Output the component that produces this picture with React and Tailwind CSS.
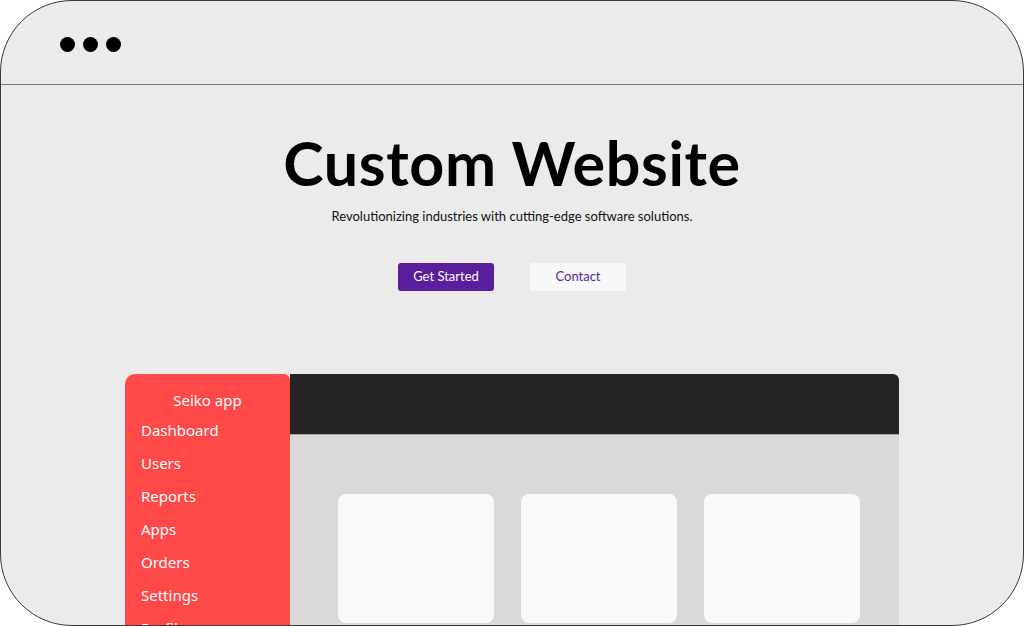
import React from 'react';

const navItems = ['Dashboard', 'Users', 'Reports', 'Apps', 'Orders', 'Settings', 'Profile'];

const Dots = () => (
  <div className="flex items-center gap-[8px]">
    <span className="w-[15px] h-[15px] rounded-full bg-black" />
    <span className="w-[15px] h-[15px] rounded-full bg-black" />
    <span className="w-[15px] h-[15px] rounded-full bg-black" />
  </div>
);

const MockDashboard = () => (
  <div className="ml-[124px] w-[774px] flex">
    {/* Sidebar */}
    <div className="w-[165px] bg-[#ff4848] rounded-tl-[10px] rounded-tr-[6px] pt-[15px] h-[300px] font-['Noto_Sans',sans-serif] text-white">
      <p className="text-center text-[15px] leading-[22px]">Seiko app</p>
      <ul className="mt-[8px] pl-[16px] space-y-[11px]">
        {navItems.map((item) => (
          <li key={item} className="text-[15px] leading-[22px]">{item}</li>
        ))}
      </ul>
    </div>

    {/* Main area */}
    <div className="flex-1 flex flex-col">
      <div className="h-[61px] bg-[#242424] rounded-tr-[6px] border-b border-[#a5a5a5]" />
      <div className="flex-1 bg-[#d9d9d9] pt-[59px] pl-[48px] flex gap-[27px]">
        <div className="w-[156px] h-[129px] bg-[#f9f9f9] rounded-[8px]" />
        <div className="w-[156px] h-[129px] bg-[#f9f9f9] rounded-[8px]" />
        <div className="w-[156px] h-[129px] bg-[#f9f9f9] rounded-[8px]" />
      </div>
    </div>
  </div>
);

export default function App() {
  return (
    <div className="w-[1024px] h-[626px] bg-white">
      <div className="w-full h-full rounded-[72px] border border-[#3a3a3a] bg-[#ebebeb] overflow-hidden flex flex-col">
        <div className="h-[84px] shrink-0 border-b border-[#7a7a7a] pl-[59px] pt-[4px] flex items-center">
          <Dots />
        </div>

        <div className="flex flex-col items-center pt-[46px]">
          <h1 className="font-['Lato',sans-serif] font-bold text-[61px] leading-[64px] text-black tracking-[0.6px]">
            Custom Website
          </h1>
          <p className="mt-[12px] font-['Lato',sans-serif] text-[13px] leading-[18px] text-[#111]">
            Revolutionizing industries with cutting-edge software solutions.
          </p>
          <div className="mt-[38px] flex gap-[36px] font-['Lato',sans-serif] text-[13px]">
            <button className="w-[96px] h-[28px] rounded-[3px] bg-[#5a1e9c] text-white">Get Started</button>
            <button className="w-[96px] h-[28px] rounded-[3px] bg-[#f8f8f8] text-[#5a1e9c]">Contact</button>
          </div>
        </div>

        <div className="mt-[83px]">
          <MockDashboard />
        </div>
      </div>
    </div>
  );
}
